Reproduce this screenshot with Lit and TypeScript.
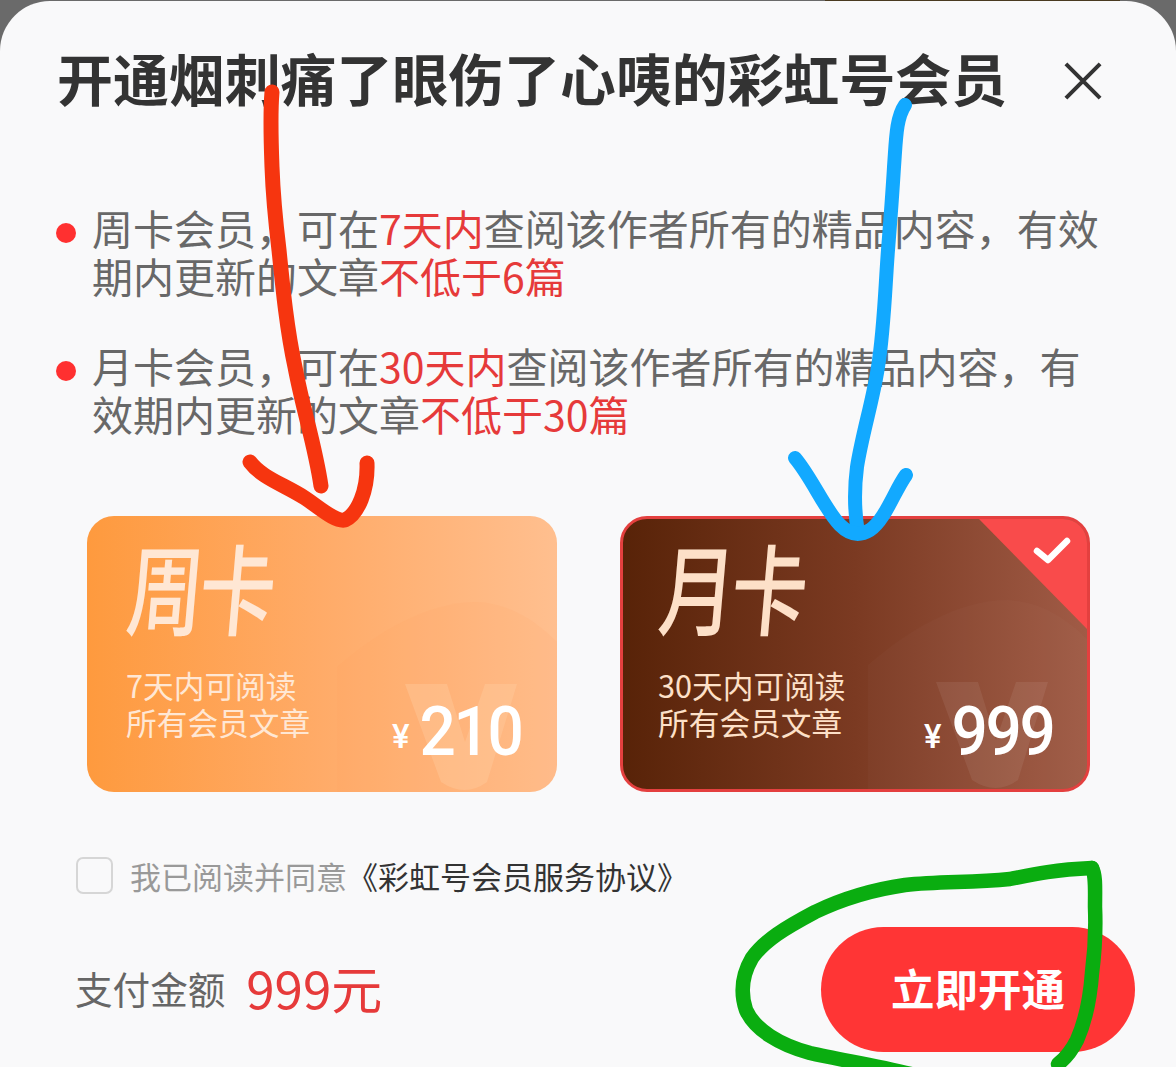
import { LitElement, html, css, svg } from "lit";
import { customElement } from "lit/decorators.js";

@customElement("app-root")
export class AppRoot extends LitElement {
  static styles = css`
    :host {
      display: block;
      position: relative;
      width: 1176px;
      height: 1067px;
      overflow: hidden;
      background: linear-gradient(90deg, #6a6a6a 0 825px, #4a3a20 825px 1120px, #6a6a6a 1120px);
      font-family: "Noto Sans CJK SC", "Noto Sans", sans-serif;
    }
    .panel {
      box-sizing: border-box;
      height: 1066px;
      margin-top: 1px;
      background: #f9f9fa;
      border-radius: 50px 50px 0 0;
      display: flex;
      flex-direction: column;
    }
    .head {
      display: flex;
      align-items: center;
      justify-content: space-between;
      height: 60px;
      margin-top: 46px;
      padding: 0 74px 0 57px;
    }
    .title {
      font-size: 55.9px;
      line-height: 60px;
      font-weight: 700;
      color: #333;
      white-space: nowrap;
    }
    .close { width: 38px; height: 38px; display: block; position: relative; top: 4px; }
    .list {
      margin-top: 96px;
      padding-left: 56px;
      display: flex;
      flex-direction: column;
      gap: 42px;
    }
    .item { display: flex; gap: 16px; align-items: flex-start; }
    .dot {
      flex: none;
      width: 20px;
      height: 20px;
      margin-top: 20px;
      border-radius: 50%;
      background: #ff3030;
    }
    .txt {
      width: 1012px;
      font-size: 41px;
      line-height: 48px;
      color: #686868;
    }
    .txt b { font-weight: 400; color: #e63a3a; }
    .cards {
      display: flex;
      gap: 63px;
      margin-top: 79px;
      padding-left: 87px;
    }
    .card {
      position: relative;
      box-sizing: border-box;
      width: 470px;
      height: 276px;
      border-radius: 27px;
      overflow: hidden;
      padding: 4px 0 0 39px;
      background: linear-gradient(90deg, #fe9a3e 0%, #ffab68 50%, #ffbf8f 100%);
      color: #ffe7d4;
    }
    .card.sel {
      border: 3px solid #e4403f;
      padding: 1px 0 0 35px;
      background: linear-gradient(90deg, #582308 0%, #7b3a22 50%, #a05b46 100%);
      color: #fde0c8;
    }
    .mark { position: absolute; right: 0; bottom: 0; width: 220px; height: 200px; }
    .sel .mark { right: -1px; bottom: -1px; }
    .corner { position: absolute; top: 0; right: 0; width: 108px; height: 110px; }
    .name {
      position: relative;
      font-size: 76px;
      line-height: 100px;
      font-weight: 500;
      letter-spacing: -4px;
      white-space: nowrap;
      transform-origin: 0 0;
      transform: translateX(8px) skewX(-5deg) scaleY(1.3);
    }
    .desc {
      position: relative;
      margin-top: 46px;
      font-size: 30.7px;
      line-height: 37px;
      white-space: pre-line;
    }
    .price {
      position: absolute;
      right: 36px;
      bottom: 26px;
      display: flex;
      align-items: baseline;
      gap: 3px;
      color: #fff;
      font-family: Roboto, "Noto Sans", sans-serif;
    }
    .sel .price { right: 34px; bottom: 23px; }
    .yen { font-size: 33px; font-weight: 500; position: relative; top: -7px; }
    .num {
      font-size: 68px;
      line-height: 68px;
      font-weight: 500;
      letter-spacing: -2.5px;
      transform-origin: 100% 50%;
      transform: scaleX(.94);
    }
    .agree {
      display: flex;
      align-items: center;
      margin-top: 65px;
      padding-left: 76px;
      height: 37px;
      font-size: 31px;
      color: #999;
    }
    .box {
      box-sizing: border-box;
      width: 37px;
      height: 37px;
      margin-right: 17px;
      border: 2px solid #d6d6d6;
      border-radius: 7px;
    }
    .agree span { color: #333; }
    .foot {
      display: flex;
      align-items: center;
      justify-content: space-between;
      margin-top: 33px;
      padding: 0 41px 0 75px;
    }
    .pay { display: flex; align-items: center; gap: 21px; padding-bottom: 5px; }
    .pay-l { font-size: 37.6px; color: #666; }
    .pay-v { font-size: 51px; line-height: 60px; color: #e63a3a; }
    .btn {
      width: 314px;
      height: 125px;
      border: 0;
      border-radius: 63px;
      background: #ff3535;
      color: #fff;
      font-family: inherit;
      font-size: 43.5px;
      font-weight: 700;
      padding: 0 0 4px;
    }
    .ink {
      position: absolute;
      inset: 0;
      width: 1176px;
      height: 1067px;
      pointer-events: none;
      fill: none;
      stroke-linecap: round;
      stroke-linejoin: round;
    }
  `;

  private mark(sel: boolean) {
    const a = sel ? "rgba(255,255,255,.02)" : "rgba(255,150,90,.09)";
    const v = sel ? "rgba(255,255,255,.07)" : "rgba(255,205,160,.38)";
    return html`<svg class="mark" viewBox="0 0 220 200">
      <path fill=${a} d="M0 75 C40 40 90 10 140 10 C175 12 200 30 220 50 V200 H0 Z" />
      <path fill=${v} d="M68 92 H110 L128 150 L148 92 H180 L150 190 Q128 206 104 190 Z" />
    </svg>`;
  }

  private card(name: string, desc: string, price: string, sel = false) {
    return html`<div class="card ${sel ? "sel" : ""}">
      ${this.mark(sel)}
      ${sel
        ? html`<svg class="corner" viewBox="0 0 108 110">
            <path fill="#f94b4b" d="M0 0 H108 V110 Z" />
            <path fill="none" stroke="#fff" stroke-width="6.5" stroke-linecap="round" stroke-linejoin="round" d="M58 32 L69 41 L88 22" />
          </svg>`
        : null}
      <div class="name">${name}</div>
      <div class="desc">${desc}</div>
      <div class="price"><span class="yen">¥</span><span class="num">${price}</span></div>
    </div>`;
  }

  render() {
    return html`
      <div class="panel">
        <div class="head">
          <div class="title">开通烟刺痛了眼伤了心咦的彩虹号会员</div>
          <svg class="close" viewBox="0 0 40 40">
            <path d="M2 2 L38 38 M38 2 L2 38" stroke="#333" stroke-width="4.2" fill="none" />
          </svg>
        </div>
        <div class="list">
          <div class="item">
            <i class="dot"></i>
            <div class="txt">周卡会员，可在<b>7天内</b>查阅该作者所有的精品内容，有效期内更新的文章<b>不低于6篇</b></div>
          </div>
          <div class="item">
            <i class="dot"></i>
            <div class="txt">月卡会员，可在<b>30天内</b>查阅该作者所有的精品内容，有效期内更新的文章<b>不低于30篇</b></div>
          </div>
        </div>
        <div class="cards">
          ${this.card("周卡", "7天内可阅读\n所有会员文章", "210")}
          ${this.card("月卡", "30天内可阅读\n所有会员文章", "999", true)}
        </div>
        <div class="agree"><i class="box"></i>我已阅读并同意<span>《彩虹号会员服务协议》</span></div>
        <div class="foot">
          <div class="pay"><span class="pay-l">支付金额</span><span class="pay-v">999元</span></div>
          <button class="btn">立即开通</button>
        </div>
      </div>
      <svg class="ink" viewBox="0 0 1176 1067">
        ${svg`
        <g stroke="#f6350f" stroke-width="15">
          <path d="M272 92 C270 115 271 140 272 167 C273 195 276 225 279 250 C283 290 287 330 295 367 C303 410 315 445 321 486" />
          <path d="M250 462 C262 478 285 485 305 498 C320 508 335 522 345 520 C358 514 368 490 367 463" />
        </g>
        <g stroke="#12a9ff" stroke-width="14">
          <path d="M905 105 C896 118 896 140 894 167 C892 200 890 225 888 250 C885 290 884 330 878 367 C873 400 862 435 857 467 C854 490 855 515 858 533" />
          <path d="M795 458 C812 478 825 510 840 525 C850 535 860 536 870 530 C885 520 895 490 906 475" />
        </g>
        <g stroke="#0aad10" stroke-width="14.5">
          <path d="M1092 868 C1050 870 1030 875 1010 879 C970 883 940 881 905 885 C870 890 840 900 815 912 C785 928 765 940 752 958 C742 975 740 992 746 1010 C755 1030 780 1045 810 1053 C840 1060 875 1065 915 1075" />
          <path d="M1092 868 C1096 875 1095 890 1095 907 C1096 930 1095 950 1092 973 C1090 1000 1085 1022 1077 1040 C1072 1050 1066 1058 1058 1064" />
        </g>`}
      </svg>
    `;
  }
}
